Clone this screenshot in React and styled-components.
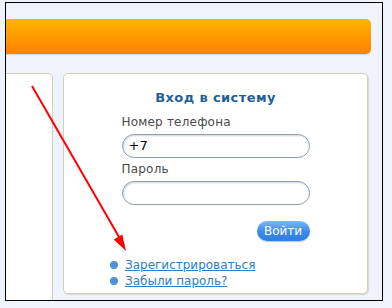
import React from "react";
import styled, { createGlobalStyle } from "styled-components";

const Global = createGlobalStyle`
  html, body { margin: 0; padding: 0; background: #eef3fc; }
  body { font-family: "DejaVu Sans", Verdana, sans-serif; }
`;

const Frame = styled.div`
  position: relative;
  box-sizing: border-box;
  margin: 2px 0 0 5px;
  width: 378px;
  height: 299px;
  border: 1px solid #000;
  background: #eef3fc;
  overflow: hidden;
  display: flex;
  flex-direction: column;
`;

const OrangeBar = styled.div`
  margin: 16px 11px 0 -10px;
  height: 35px;
  flex: none;
  border-radius: 5px;
  background: linear-gradient(#ffb300, #ff8100);
  box-shadow: 0 1px 1px rgba(150, 120, 60, 0.25);
`;

const Columns = styled.div`
  display: flex;
  align-items: flex-start;
  gap: 10px;
  margin-top: 19px;
  flex: 1;
`;

const SidePanel = styled.div`
  box-sizing: border-box;
  margin-left: -10px;
  width: 57px;
  height: 260px;
  background: #fff;
  border: 1px solid #cfd1bb;
  border-radius: 5px;
`;

const LoginPanel = styled.div`
  box-sizing: border-box;
  width: 305px;
  height: 221px;
  background: #fff;
  border: 1px solid #cfd1bb;
  border-radius: 5px;
  box-shadow: 1px 1px 1px rgba(170, 170, 150, 0.35);
  padding: 16px 0 0;
  display: flex;
  flex-direction: column;
`;

const Title = styled.div`
  font: bold 13px/16px "DejaVu Sans", Verdana, sans-serif;
  color: #1f5f97;
  text-align: center;
  letter-spacing: 0.4px;
`;

const Form = styled.div`
  width: 188px;
  margin: 9px auto 0;
  display: flex;
  flex-direction: column;
`;

const Label = styled.div`
  font: 12px/15px "DejaVu Sans", Verdana, sans-serif;
  color: #4a4a4a;
  margin-top: ${(p) => p.$top || 0}px;
  margin-bottom: 4px;
  letter-spacing: 0.2px;
`;

const Input = styled.div`
  box-sizing: border-box;
  height: 24px;
  border: 1.5px solid #8d9db2;
  border-radius: 12px;
  box-shadow: inset 1px 1px 2px rgba(120, 130, 150, 0.35);
  padding: 0 6px;
  font: 13px/21px "DejaVu Sans", Verdana, sans-serif;
  color: #000;
`;

const ButtonRow = styled.div`
  display: flex;
  justify-content: flex-end;
  margin-top: 16px;
`;

const Button = styled.div`
  box-sizing: border-box;
  width: 53px;
  height: 20px;
  border-radius: 10px;
  background: linear-gradient(#7ab8f7, #3b89ea 55%, #2f7fe2);
  box-shadow: 0 1px 1px rgba(60, 100, 160, 0.35);
  color: #fff;
  font: 12px/20px "DejaVu Sans", Verdana, sans-serif;
  text-align: center;
`;

const Links = styled.ul`
  list-style: none;
  margin: 16px 0 0 46px;
  padding: 0;
`;

const LinkItem = styled.li`
  display: flex;
  align-items: center;
  gap: 7px;
  height: 16px;
  &::before {
    content: "";
    width: 8px;
    height: 8px;
    border-radius: 50%;
    background: #4b93da;
    flex: none;
  }
`;

const Link = styled.a`
  font: 12px/16px "DejaVu Sans", Verdana, sans-serif;
  color: #2f7cc5;
  text-decoration: underline;
`;

const Arrow = styled.svg`
  position: absolute;
  left: -6px;
  top: -3px;
  pointer-events: none;
`;

export default function App() {
  return (
    <>
      <Global />
      <Frame>
        <OrangeBar />
        <Columns>
          <SidePanel />
          <LoginPanel>
            <Title>Вход в систему</Title>
            <Form>
              <Label>Номер телефона</Label>
              <Input>+7</Input>
              <Label $top={4}>Пароль</Label>
              <Input />
              <ButtonRow>
                <Button>Войти</Button>
              </ButtonRow>
            </Form>
            <Links>
              <LinkItem>
                <Link>Зарегистрироваться</Link>
              </LinkItem>
              <LinkItem>
                <Link>Забыли пароль?</Link>
              </LinkItem>
            </Links>
          </LoginPanel>
        </Columns>
        <Arrow width="392" height="308" viewBox="0 0 392 308">
          <line x1="32" y1="86" x2="119" y2="237" stroke="#ff0000" strokeWidth="2" />
          <polygon points="126,251 113.7,239.6 122.3,234.6" fill="#ff0000" />
        </Arrow>
      </Frame>
    </>
  );
}
